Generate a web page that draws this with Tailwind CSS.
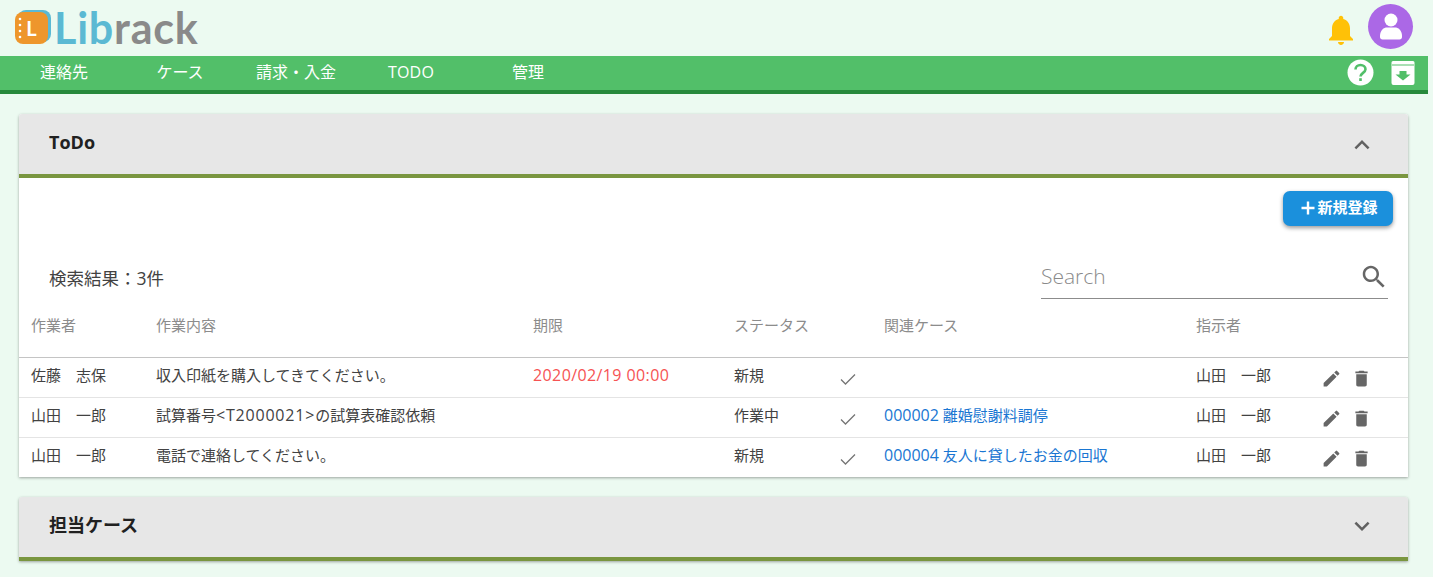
<!DOCTYPE html>
<html lang="ja">
<head>
    <meta charset="UTF-8">
    <title>Librack</title>
    <script src="https://cdn.jsdelivr.net/npm/@tailwindcss/browser@4"></script>
</head>
<body class="bg-[#ecfaf1] h-[577px] overflow-hidden font-['Open_Sans','Noto_Sans_CJK_JP',sans-serif] text-[#424242]">
<div class="w-[1428px]">

    <!-- Top bar -->
    <header class="h-[56px] flex items-center justify-between pl-[15px] pr-[15px]">
        <div class="flex items-center h-[44px] gap-[3px] -mt-[2px]">
            <div class="relative w-[36px] h-[34px]">
                <div class="absolute left-[3px] top-0 w-[33px] h-[32px] rounded-[8px] bg-[#5bb9d3]"></div>
                <div class="absolute left-0 top-[2px] w-[33px] h-[32px] rounded-[8px] bg-[#ee962c] flex items-center justify-center text-white font-bold text-[20px] leading-none font-['Lato',sans-serif]">L</div>
                <svg class="absolute left-0 top-[7px] w-[8px] h-[22px]" viewBox="0 0 8 22" fill="#fff"><circle cx="5" cy="2" r="1.300"/><circle cx="5" cy="8" r="1.300"/><circle cx="5" cy="14" r="1.300"/><circle cx="5" cy="20" r="1.300"/></svg>
            </div>
            <div class="font-['Lato',sans-serif] font-bold text-[43px] leading-none tracking-[0.8px]"><span class="text-[#5bb9d3]">Lib</span><span class="text-[#8a8a8a]">rack</span></div>
        </div>
        <div class="flex items-center gap-[9px] mt-[-3px]">
            <svg class="w-[36px] h-[36px] mt-[6px]" viewBox="0 0 24 24" fill="#ffc107"><path d="M12 22c1.100 0 2-.9 2-2h-4c0 1.100.9 2 2 2zm6-6v-5c0-3.070-1.630-5.640-4.500-6.320V4c0-.83-.67-1.500-1.500-1.500s-1.500.67-1.500 1.500v.68C7.640 5.360 6 7.920 6 11v5l-2 2v1h16v-1l-2-2z"/></svg>
            <div class="w-[45px] h-[45px] rounded-full bg-[#ab68e6] flex items-center justify-center">
                <svg class="w-[26px] h-[30px]" viewBox="0 0 26 30" fill="#fff"><circle cx="13" cy="8" r="6.500"/><path d="M2 24c0-6 4-8.500 7-8.500h8c3 0 7 2.500 7 8.500v1c0 1.500-1 2.500-2.500 2.500h-17C3 27.500 2 26.500 2 25z"/></svg>
            </div>
        </div>
    </header>

    <!-- Nav -->
    <nav class="h-[38px] bg-[#52bf69] border-b-4 border-[#27893c] flex items-center justify-between text-white text-[16px]">
        <div class="flex items-center h-full pb-[2px]">
            <a class="w-[128px] text-center">連絡先</a>
            <a class="w-[104px] text-center">ケース</a>
            <a class="w-[128px] text-center">請求・入金</a>
            <a class="w-[102px] text-center tracking-[0.2px]">TODO</a>
            <a class="w-[132px] text-center">管理</a>
        </div>
        <div class="flex items-center gap-[17px] pr-[13px] pb-[1px]">
            <svg class="w-[27px] h-[27px]" viewBox="0 0 27 27"><circle cx="13.500" cy="13.500" r="13" fill="#fff"/><path fill="none" stroke="#52bf69" stroke-width="2.600" d="M8.500 10.500c0-2.800 2.200-4.500 5-4.500s5 1.800 5 4.300c0 3.400-5 3.700-5 7.200"/><rect x="12.200" y="19.200" width="2.600" height="2.800" fill="#52bf69"/></svg>
            <svg class="w-[24px] h-[24px]" viewBox="0 0 24 24"><path fill="#fff" d="M2 0h20a1.500 1.500 0 0 1 1.500 1.500V22a2 2 0 0 1-2 2h-19a2 2 0 0 1-2-2V1.500A1.500 1.500 0 0 1 2 0z"/><path fill="#52bf69" d="M1 3.500h22v1H1z"/><path fill="#52bf69" d="M8.500 10h7v3.500h4L12 19.500l-7.500-6h4z"/></svg>
        </div>
    </nav>

    <!-- ToDo -->
    <section class="mt-[20px] ml-[19px] w-[1389px] bg-white shadow-[0_1px_3px_rgba(0,0,0,0.35)] rounded-t-[3px]">
        <div class="h-[64px] bg-[#e7e7e7] border-b-4 border-[#7a9640] flex items-center justify-between pl-[30px] pr-[31px] rounded-t-[3px]">
            <h2 class="text-[18px] font-bold text-[#212121] pb-[4px]">ToDo</h2>
            <svg class="w-[30px] h-[30px] mt-[2px] text-[#616161]" viewBox="0 0 24 24" fill="currentColor"><path d="M7.410 15.410 12 10.830l4.590 4.580L18 14l-6-6-6 6z"/></svg>
        </div>

        <div class="flex justify-end pr-[15px] pt-[13px]">
            <button class="w-[110px] h-[35px] pb-[3px] pl-[2px] bg-[#1b90dc] text-white text-[15px] font-bold rounded-[7px] shadow-[0_2px_4px_rgba(0,0,0,0.4)] flex items-center justify-center gap-[1px]">
                <svg class="w-[16px] h-[16px] mt-[2px]" viewBox="0 0 16 16" fill="#fff"><path d="M6.800 1.500h2.400v5.300h5.300v2.400H9.200v5.300H6.800V9.200H1.500V6.800h5.300z"/></svg>
                新規登録
            </button>
        </div>

        <div class="flex items-end justify-between pl-[30px] pr-[20px] mt-[21px] h-[52px]">
            <p class="text-[17.500px] pb-[8px]">検索結果：3件</p>
            <div class="w-[347px] h-[52px] border-b border-[#8c8c8c] flex items-center justify-between">
                <span class="text-[21px] font-light text-[#8a8a8a] mt-[8px]">Search</span>
                <svg class="w-[30px] h-[30px] -mr-[1px] mt-[8px]" viewBox="0 0 24 24" fill="#666"><path d="M15.500 14h-.79l-.28-.27C15.410 12.590 16 11.110 16 9.500 16 5.910 13.090 3 9.500 3S3 5.910 3 9.500 5.910 16 9.500 16c1.610 0 3.090-.59 4.230-1.570l.27.28v.79l5 4.990L20.490 19l-4.990-5zm-6 0C7.010 14 5 11.990 5 9.500S7.010 5 9.500 5 14 7.010 14 9.500 11.990 14 9.500 14z"/></svg>
            </div>
        </div>

        <table class="w-full table-fixed text-[15px]">
            <colgroup>
                <col class="w-[137px]"><col class="w-[377px]"><col class="w-[201px]"><col class="w-[104px]"><col class="w-[46px]"><col class="w-[312px]"><col class="w-[124px]"><col>
            </colgroup>
            <thead>
                <tr class="h-[58px] border-b border-[#c4c4c4] text-[#8c8c8c] text-left">
                    <th class="font-normal pl-[12px] pb-[6px]">作業者</th>
                    <th class="font-normal pb-[6px]">作業内容</th>
                    <th class="font-normal pb-[6px]">期限</th>
                    <th class="font-normal pb-[6px]">ステータス</th>
                    <th></th>
                    <th class="font-normal pb-[6px]">関連ケース</th>
                    <th class="font-normal pb-[6px]">指示者</th>
                    <th></th>
                </tr>
            </thead>
            <tbody>
                <tr class="h-[40px] border-b border-[#e4e4e4]">
                    <td class="pl-[12px] pb-[4px]">佐藤　志保</td>
                    <td class="pb-[4px]">収入印紙を購入してきてください。</td>
                    <td class="pb-[4px] text-[#f65353] text-[16px] tracking-[0.4px]">2020/02/19 00:00</td>
                    <td class="pb-[4px]">新規</td>
                    <td><svg class="w-[20px] h-[20px] mt-[3px]" viewBox="0 0 20 20" fill="none" stroke="#757575" stroke-width="1.300"><path d="M3 10.500l4.500 4.500L17 5.500"/></svg></td>
                    <td></td>
                    <td class="pb-[4px]">山田　一郎</td>
                    <td>
                        <div class="flex items-center gap-[9px] mt-[2px] ml-[1px]">
                            <svg class="w-[21px] h-[21px]" viewBox="0 0 24 24" fill="#666"><path d="M3 17.250V21h3.750L17.810 9.940l-3.750-3.750L3 17.250zM20.710 7.040a1 1 0 0 0 0-1.410l-2.340-2.340a1 1 0 0 0-1.410 0l-1.830 1.830 3.750 3.750 1.830-1.830z"/></svg>
                            <svg class="w-[21px] h-[21px]" viewBox="0 0 24 24" fill="#666"><path d="M6 19c0 1.100.9 2 2 2h8c1.100 0 2-.9 2-2V7H6v12zM19 4h-3.500l-1-1h-5l-1 1H5v2h14V4z"/></svg>
                        </div>
                    </td>
                </tr>
                <tr class="h-[40px] border-b border-[#e4e4e4]">
                    <td class="pl-[12px] pb-[4px]">山田　一郎</td>
                    <td class="pb-[4px]">試算番号<span class="text-[16px] tracking-[0.8px]">&lt;T2000021&gt;</span>の試算表確認依頼</td>
                    <td></td>
                    <td class="pb-[4px]">作業中</td>
                    <td><svg class="w-[20px] h-[20px] mt-[3px]" viewBox="0 0 20 20" fill="none" stroke="#757575" stroke-width="1.300"><path d="M3 10.500l4.500 4.500L17 5.500"/></svg></td>
                    <td class="pb-[4px] text-[#1976d2]"><span class="text-[16px]">000002</span> 離婚慰謝料調停</td>
                    <td class="pb-[4px]">山田　一郎</td>
                    <td>
                        <div class="flex items-center gap-[9px] mt-[2px] ml-[1px]">
                            <svg class="w-[21px] h-[21px]" viewBox="0 0 24 24" fill="#666"><path d="M3 17.250V21h3.750L17.810 9.940l-3.750-3.750L3 17.250zM20.710 7.040a1 1 0 0 0 0-1.410l-2.340-2.340a1 1 0 0 0-1.410 0l-1.830 1.830 3.750 3.750 1.830-1.830z"/></svg>
                            <svg class="w-[21px] h-[21px]" viewBox="0 0 24 24" fill="#666"><path d="M6 19c0 1.100.9 2 2 2h8c1.100 0 2-.9 2-2V7H6v12zM19 4h-3.500l-1-1h-5l-1 1H5v2h14V4z"/></svg>
                        </div>
                    </td>
                </tr>
                <tr class="h-[40px]">
                    <td class="pl-[12px] pb-[4px]">山田　一郎</td>
                    <td class="pb-[4px]">電話で連絡してください。</td>
                    <td></td>
                    <td class="pb-[4px]">新規</td>
                    <td><svg class="w-[20px] h-[20px] mt-[3px]" viewBox="0 0 20 20" fill="none" stroke="#757575" stroke-width="1.300"><path d="M3 10.500l4.500 4.500L17 5.500"/></svg></td>
                    <td class="pb-[4px] text-[#1976d2]"><span class="text-[16px]">000004</span> 友人に貸したお金の回収</td>
                    <td class="pb-[4px]">山田　一郎</td>
                    <td>
                        <div class="flex items-center gap-[9px] mt-[2px] ml-[1px]">
                            <svg class="w-[21px] h-[21px]" viewBox="0 0 24 24" fill="#666"><path d="M3 17.250V21h3.750L17.810 9.940l-3.750-3.750L3 17.250zM20.710 7.040a1 1 0 0 0 0-1.410l-2.340-2.340a1 1 0 0 0-1.410 0l-1.830 1.830 3.750 3.750 1.830-1.830z"/></svg>
                            <svg class="w-[21px] h-[21px]" viewBox="0 0 24 24" fill="#666"><path d="M6 19c0 1.100.9 2 2 2h8c1.100 0 2-.9 2-2V7H6v12zM19 4h-3.500l-1-1h-5l-1 1H5v2h14V4z"/></svg>
                        </div>
                    </td>
                </tr>
            </tbody>
        </table>
    </section>

    <!-- Cases -->
    <section class="mt-[20px] ml-[19px] w-[1389px] shadow-[0_1px_3px_rgba(0,0,0,0.35)] rounded-t-[3px]">
        <div class="h-[64px] bg-[#e7e7e7] border-b-4 border-[#7a9640] flex items-center justify-between pl-[30px] pr-[31px] rounded-t-[3px]">
            <h2 class="text-[18px] font-bold text-[#212121] pb-[4px]">担当ケース</h2>
            <svg class="w-[30px] h-[30px] -mt-[2px] text-[#616161]" viewBox="0 0 24 24" fill="currentColor"><path d="M16.590 8.590 12 13.170 7.410 8.590 6 10l6 6 6-6z"/></svg>
        </div>
    </section>
</div>
</body>
</html>
